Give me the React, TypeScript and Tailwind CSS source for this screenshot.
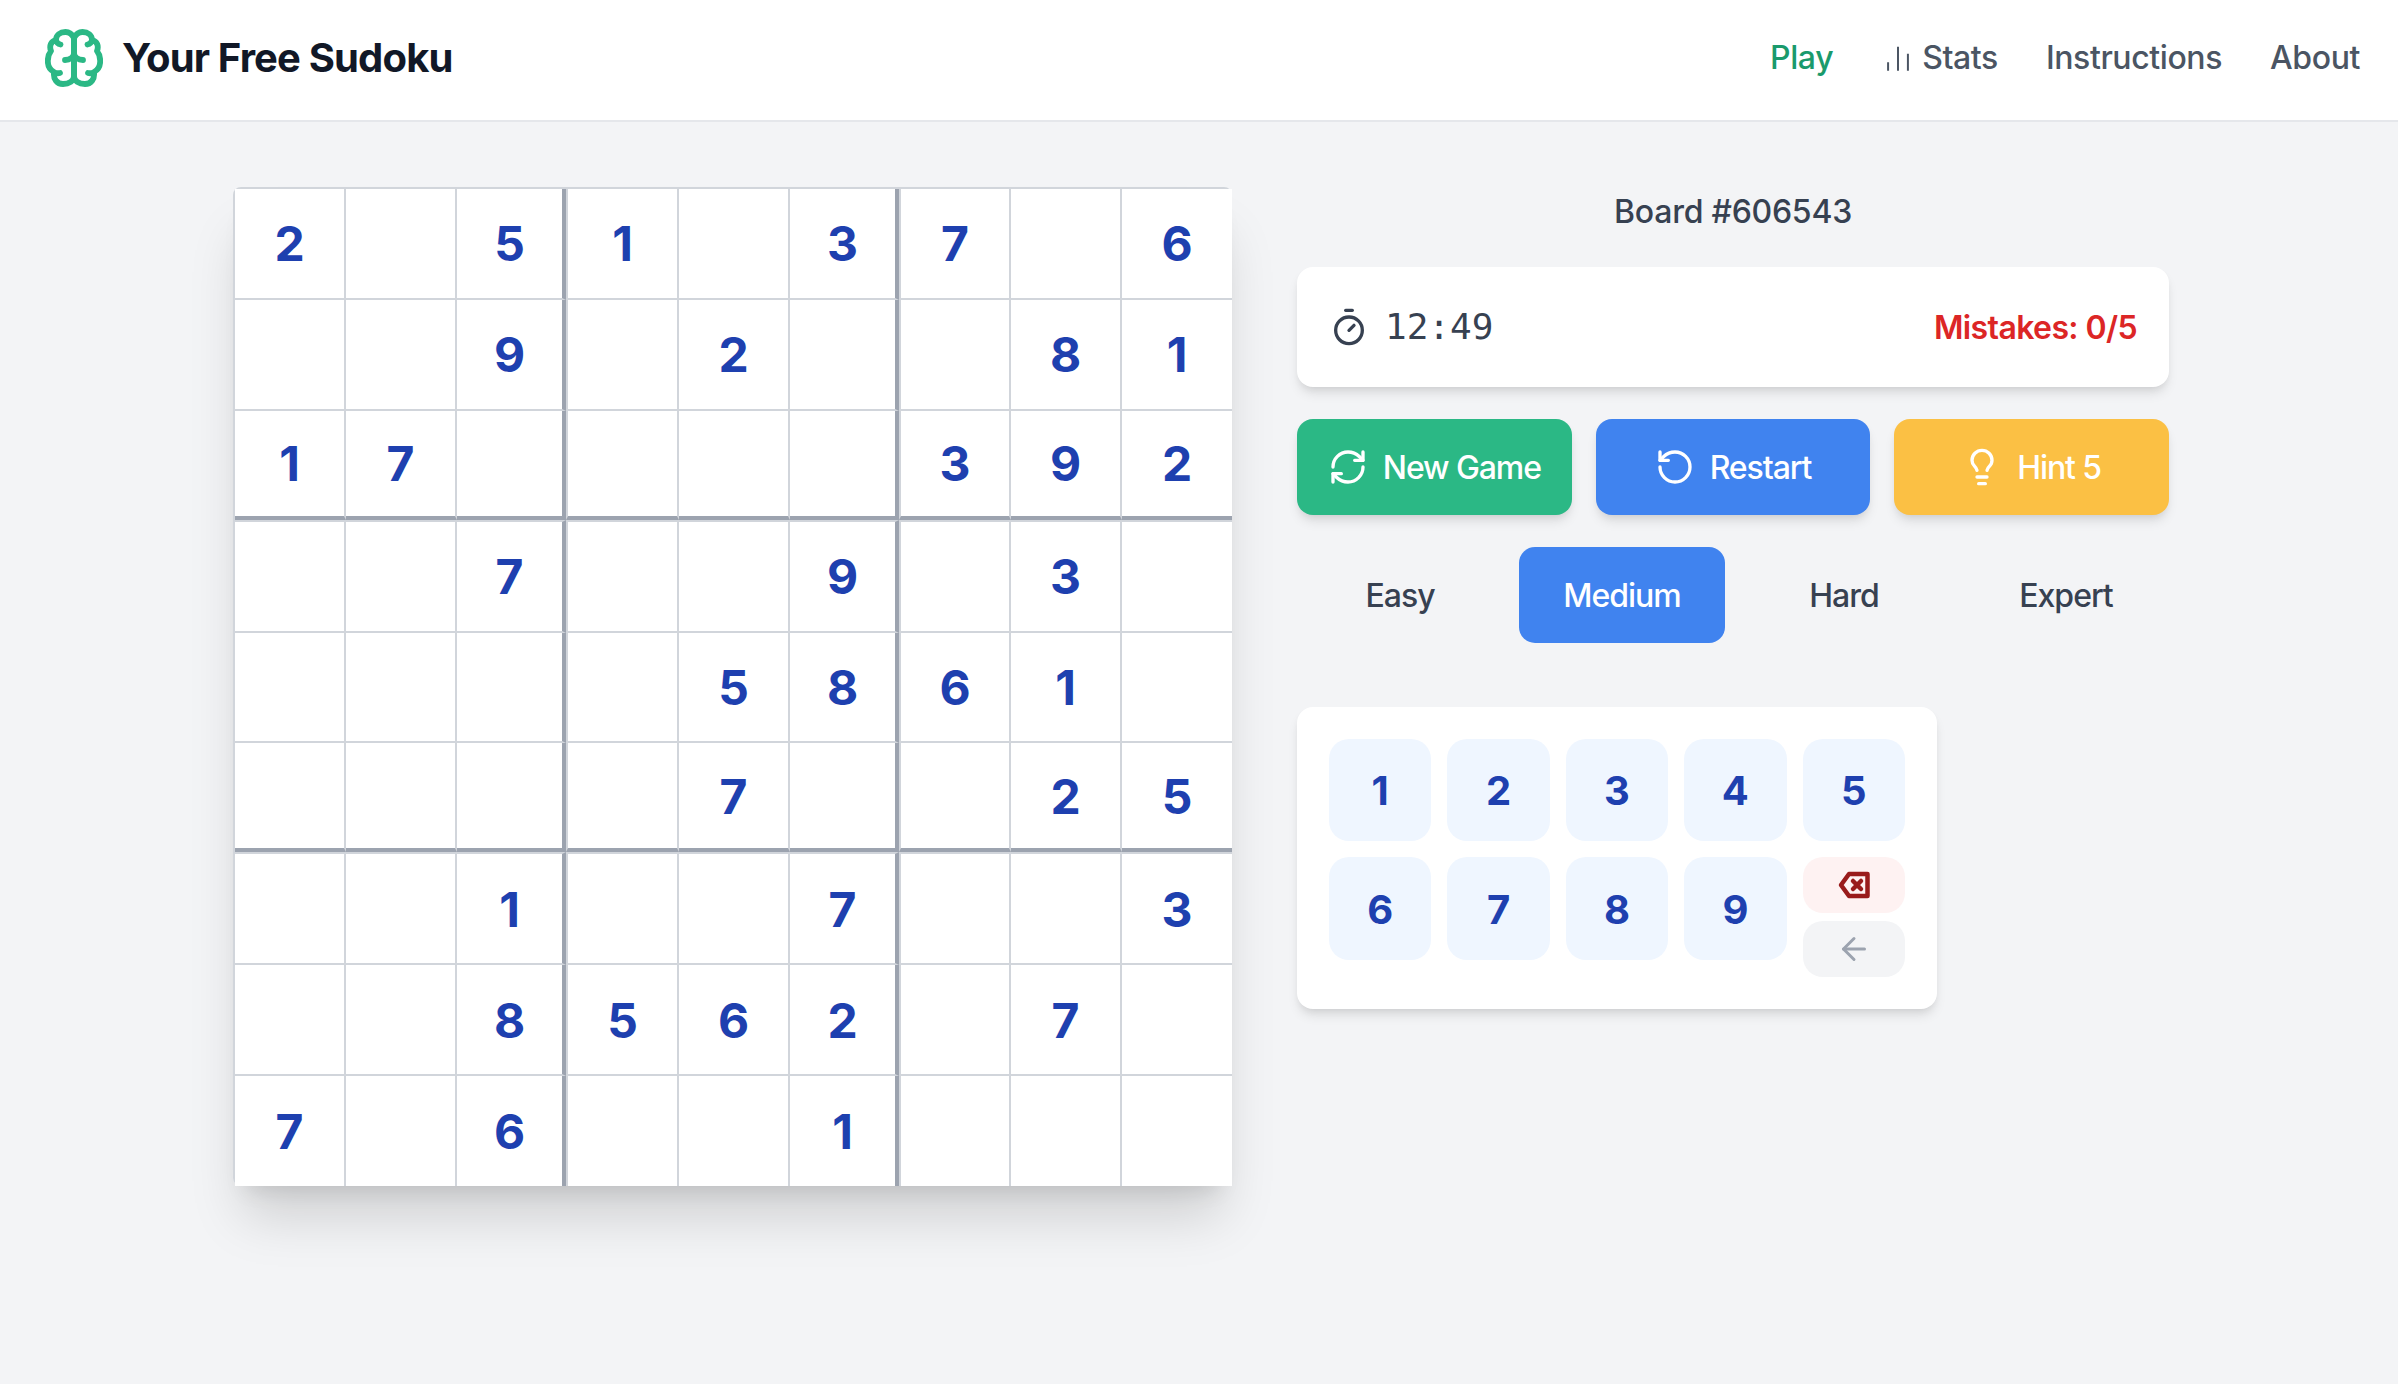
import React from 'react';
import { Timer, RefreshCw, RotateCcw, Lightbulb, ArrowLeft } from 'lucide-react';

const board = [
  '2.51.37.6',
  '..9.2..81',
  '17....392',
  '..7..9.3.',
  '....5861.',
  '....7..25',
  '..1..7..3',
  '..8562.7.',
  '7.6..1...',
];

const Cell: React.FC<{ value: string; row: number; col: number }> = ({ value, row, col }) => {
  const thickRight = col === 2 || col === 5;
  const thickBottom = row === 2 || row === 5;
  return (
    <div
      className={[
        'flex items-center justify-center bg-white text-[48px] font-bold text-[#1e40af] border-solid',
        col === 8 ? '' : thickRight ? 'border-r-4 border-r-[#9ca3af]' : 'border-r-2 border-r-[#d1d5db]',
        row === 8 ? '' : thickBottom ? 'border-b-4 border-b-[#9ca3af]' : 'border-b-2 border-b-[#d1d5db]',
        col === 3 || col === 6 ? 'border-l-2 border-l-[#d1d5db]' : '',
        row === 3 || row === 6 ? 'border-t-2 border-t-[#d1d5db]' : '',
        row >= 4 ? 'pt-[2px]' : '',
      ].join(' ')}
    >
      {value === '.' ? '' : value}
    </div>
  );
};

const halfBrain =
  'M29 9C27 5 24 3 20.5 3C15 3 11 6 11 11C6 12 4 17 6 22C3.5 25 2.8 28 2.8 32C2.8 37 5 41 9 43C8 50 12 55 18 55C24 55 29 52 29 47ZM11 11C11.5 13.5 13 15 15.5 15.5M9 43C11 44.5 13 44.5 15 44M20 31C25 31 29 28 29 24';

const BrainLogo = () => (
  <svg width="58" height="58" viewBox="0 0 58 58" fill="none" stroke="#2bb885" strokeWidth="5.8" strokeLinecap="round" strokeLinejoin="round">
    <path d={halfBrain} />
    <path d={halfBrain} transform="matrix(-1 0 0 1 58 0)" />
  </svg>
);

const Header = () => (
  <header className="flex h-[122px] items-center justify-between border-b-2 border-[#e5e7eb] bg-white pb-[4px] pl-[45px] pr-[38px]">
    <div className="flex items-center gap-[19px]">
      <BrainLogo />
      <span className="text-[40px] font-bold tracking-[-0.85px] text-[#111827]">Your Free Sudoku</span>
    </div>
    <nav className="flex items-center gap-[48px] text-[32px] font-medium tracking-[-0.4px] text-[#4b5563]">
      <span className="text-[#1a9a6c]">Play</span>
      <span className="flex items-center gap-[7px]">
        <svg width="34" height="34" viewBox="0 0 24 24" fill="none" stroke="currentColor" strokeWidth="1.4">
          <path d="M5 21v-6M12 21V4M19 21V9" />
        </svg>
        Stats
      </span>
      <span>Instructions</span>
      <span>About</span>
    </nav>
  </header>
);

const ActionButton: React.FC<{ icon: React.ReactNode; label: string; color: string }> = ({ icon, label, color }) => (
  <button className={`flex h-[96px] items-center justify-center gap-[15px] rounded-[16px] text-[32px] font-medium tracking-[-1.1px] text-white shadow-[0_8px_12px_-2px_rgba(0,0,0,0.1),0_4px_8px_-4px_rgba(0,0,0,0.1)] ${color}`}>
    {icon}
    <span className="pt-[2px]">{label}</span>
  </button>
);

const Key: React.FC<{ n: number }> = ({ n }) => (
  <button className="flex aspect-square items-center justify-center rounded-[20px] bg-[#eff6ff] pt-[2px] text-[40px] font-bold text-[#1e40af]">
    {n}
  </button>
);

export default function App() {
  return (
    <div className="min-h-screen bg-[#f3f4f6] font-['Inter',sans-serif]">
      <Header />
      <main className="flex items-start gap-[65px] pl-[233px] pt-[65px]">
        <div className="grid h-[999px] w-[999px] grid-cols-[111px_111px_109px_113px_111px_109px_112px_111px_110px] grid-rows-[111px_111px_109px_113px_110px_109px_113px_111px_110px] rounded-[8px] border-l-2 border-t-2 border-[#d1d5db] shadow-[0_40px_50px_-10px_rgba(0,0,0,0.15),0_16px_20px_-12px_rgba(0,0,0,0.1)]">
          {board.map((line, r) =>
            line.split('').map((v, c) => <Cell key={`${r}-${c}`} value={v} row={r} col={c} />)
          )}
        </div>

        <div className="flex w-[872px] flex-col">
          <div className="flex h-[50px] items-center justify-center text-[32px] font-medium tracking-[-0.25px] text-[#374151]">Board #606543</div>

          <div className="mt-[30px] flex h-[120px] items-center justify-between rounded-[16px] bg-white px-[32px] shadow-[0_8px_12px_-2px_rgba(0,0,0,0.1),0_4px_8px_-4px_rgba(0,0,0,0.1)]">
            <div className="flex items-center gap-[16px] text-[#374151]">
              <Timer size={40} strokeWidth={2} />
              <span className="font-['DejaVu_Sans_Mono',monospace] text-[36px]">12:49</span>
            </div>
            <span className="pt-[2px] text-[32px] font-semibold tracking-[-0.6px] text-[#dc2626]">Mistakes: 0/5</span>
          </div>

          <div className="mt-[32px] grid grid-cols-3 gap-[24px]">
            <ActionButton icon={<RefreshCw size={40} strokeWidth={2} />} label="New Game" color="bg-[#2bb885]" />
            <ActionButton icon={<RotateCcw size={40} strokeWidth={2} />} label="Restart" color="bg-[#4083ef]" />
            <ActionButton icon={<Lightbulb size={40} strokeWidth={2} />} label="Hint 5" color="bg-[#fbc044]" />
          </div>

          <div className="mt-[32px] grid grid-cols-4 gap-[16px] text-[32px] font-medium tracking-[-1px] text-[#374151]">
            <button className="h-[96px] rounded-[16px] pt-[2px]">Easy</button>
            <button className="h-[96px] rounded-[16px] bg-[#4083ef] pt-[2px] text-white">Medium</button>
            <button className="h-[96px] rounded-[16px] pt-[2px]">Hard</button>
            <button className="h-[96px] rounded-[16px] pt-[2px]">Expert</button>
          </div>

          <div className="mt-[64px] w-[640px] rounded-[16px] bg-white p-[32px] shadow-[0_8px_12px_-2px_rgba(0,0,0,0.1),0_4px_8px_-4px_rgba(0,0,0,0.1)]">
            <div className="grid grid-cols-5 items-start gap-[16px]">
              {[1, 2, 3, 4, 5, 6, 7, 8, 9].map((n) => (
                <Key key={n} n={n} />
              ))}
              <div className="flex flex-col gap-[8px]">
                <button className="flex h-[56px] items-center justify-center rounded-[20px] bg-[#fef2f2] text-[#991b1b]">
                  <svg width="32" height="28" viewBox="0 0 32 28" fill="none" stroke="currentColor" strokeWidth="4.5" strokeLinejoin="round" strokeLinecap="round">
                    <path d="M29.5 3H11L3 14l8 11h18.5Z" />
                    <path d="M15 10l8 8M23 10l-8 8" />
                  </svg>
                </button>
                <button className="flex h-[56px] items-center justify-center rounded-[20px] bg-[#f3f4f6] text-[#9ca3af]">
                  <ArrowLeft size={36} strokeWidth={2} />
                </button>
              </div>
            </div>
          </div>
        </div>
      </main>
    </div>
  );
}
